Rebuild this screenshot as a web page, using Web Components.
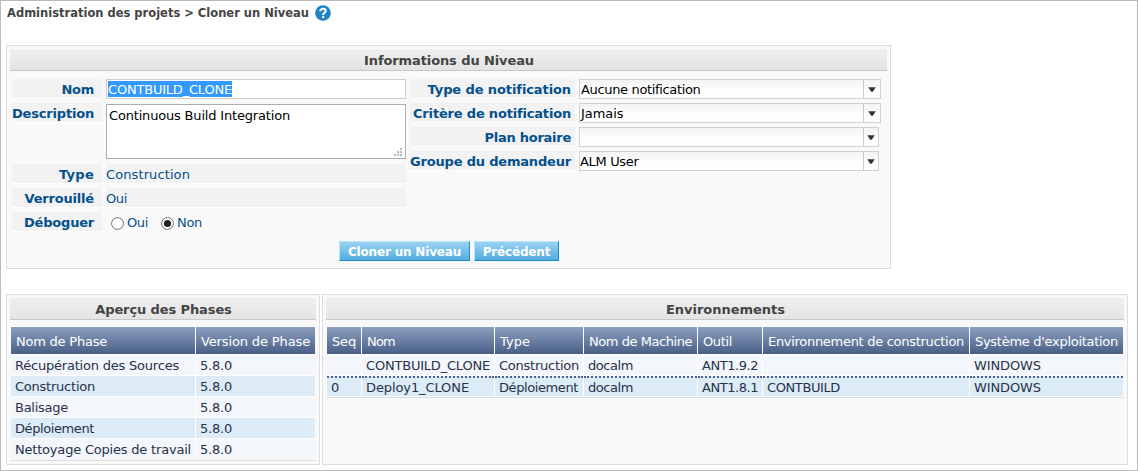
<!DOCTYPE html>
<html lang="fr">
<head>
<meta charset="utf-8">
<title>Cloner un Niveau</title>
<style>
html,body{margin:0;height:100%}
body{font:13px/21px "DejaVu Sans",Verdana,sans-serif;background:#fff;overflow:hidden}
</style>
</head>
<body>
<clone-page></clone-page>
<script>
class Base extends HTMLElement{
  constructor(){super();this.attachShadow({mode:'open'});}
  draw(html){this.shadowRoot.innerHTML=html;}
}
// Text run whose tracking is adjusted to occupy the given width.
class FitText extends Base{
  connectedCallback(){
    this.draw('<style>:host{display:inline-block;white-space:nowrap;letter-spacing:0}</style><slot></slot>');
    requestAnimationFrame(()=>this.fit());
    this.fit();
  }
  fit(){
    const w=+this.getAttribute('w');
    this.style.letterSpacing='0px';
    const n=this.getBoundingClientRect().width;
    if(w&&n)this.style.letterSpacing=((w-n)/this.textContent.length)+'px';
  }
}
const t=(s,w)=>`<fit-text w="${w}">${s}</fit-text>`;

class UiPanel extends Base{
  connectedCallback(){
    this.draw(`<style>
    :host{display:block;box-sizing:border-box;border:1px solid #ddd;background:#f9f9f9;padding:3px}
    header{height:21px;border-bottom:1px solid #c8c8c8;background:linear-gradient(#efefef,#e4e4e4);text-align:center;font-weight:bold;line-height:23px;color:#444;padding-left:1px}
    </style><header>${t(this.getAttribute('heading'),this.getAttribute('hw'))}</header><slot></slot>`);
  }
}
class FieldLabel extends Base{
  connectedCallback(){
    this.draw(`<style>:host{display:block;box-sizing:border-box;height:20px;background:#f2f2f2;border-bottom:1px solid #fff;text-align:right;padding-right:8px;font-weight:bold;line-height:21px;color:#04508c;white-space:nowrap}
    :host([tight]){padding-right:4px}</style><slot></slot>`);
  }
}
class ReadValue extends Base{
  connectedCallback(){
    this.draw(`<style>:host{display:block;box-sizing:border-box;height:20px;background:#f2f2f2;border-bottom:1px solid #fff;line-height:21px;color:#04508c}</style><slot></slot>`);
  }
}
class TextField extends Base{
  connectedCallback(){
    this.draw(`<style>:host{display:block;box-sizing:border-box;height:20px;border:1px solid #ccc;background:#fff;padding:1px}
    span{display:inline-block;vertical-align:top;height:16px;line-height:17px;background:#39f;color:#fff}</style><span><slot></slot></span>`);
  }
}
class TextArea extends Base{
  connectedCallback(){
    this.draw(`<style>:host{display:block;position:relative;box-sizing:border-box;height:55px;margin-top:1px;border:1px solid #abadb3;background:#fff;padding:0 2px;color:#000}
    svg{position:absolute;right:3px;bottom:2px}</style><slot></slot>
    <svg width="8" height="8" fill="#b8b8b8" shape-rendering="crispEdges"><path d="M6 0h2v2H6zM3 3h2v2H3zM6 3h2v2H6zM0 6h2v2H0zM3 6h2v2H3zM6 6h2v2H6z"/></svg>`);
  }
}
class SelectBox extends Base{
  connectedCallback(){
    this.draw(`<style>:host{display:flex;box-sizing:border-box;width:302px;height:20px;border:1px solid #d0d0d0;background:linear-gradient(#f3f3f3,#fff 60%);color:#000;line-height:19px}
    :host([narrow]){width:300px}
    div{flex:1;padding-left:1px}
    :host([flush]) div{padding-left:0}
    i{box-sizing:border-box;width:17px;border-left:1px solid #ccc;display:flex;align-items:center;justify-content:center}
    :host([narrow]) i{width:15px}
    </style><div><slot></slot></div><i><svg width="8" height="5"><path d="M.3 .3h7.400L4.800 4.700H3.200z" fill="#333"/></svg></i>`);
  }
}
class RadioOption extends Base{
  connectedCallback(){
    const on=this.hasAttribute('checked');
    this.draw(`<style>:host{display:flex;align-items:flex-start;gap:3px;color:#04508c;line-height:21px}svg{margin-top:5px;flex:none}</style>
    <svg width="13" height="13"><circle cx="6.5" cy="6.5" r="5.9" fill="#fff" stroke="#707070"/>${on?'<circle cx="6.5" cy="6.5" r="3.6" fill="#222"/>':''}</svg><slot></slot>`);
  }
}
class ActionButton extends Base{
  connectedCallback(){
    this.draw(`<style>:host{display:block;box-sizing:border-box;height:20px;border:1px solid;border-color:#b5e6f9 #1f8bcb #1f8bcb #b5e6f9;background:linear-gradient(#9bd2f3,#52ace0);color:#fff;font-weight:bold;font-size:12px;line-height:20px;text-align:center}</style><slot></slot>`);
  }
}
class HelpIcon extends Base{
  connectedCallback(){
    this.draw(`<style>:host{display:block;width:16px;height:16px}svg{display:block}</style><svg width="16" height="16"><circle cx="8" cy="8" r="7.8" fill="#1f82c6"/><path d="M5.3 6.2C5.3 4.4 6.5 3.7 8 3.7s2.7.8 2.7 2.3C10.7 7.9 8.1 7.700 8.100 9.900" fill="none" stroke="#fff" stroke-width="2"/><circle cx="8.100" cy="12" r="1.250" fill="#fff"/></svg>`);
  }
}
class DataGrid extends Base{
  connectedCallback(){
    const d=JSON.parse(this.getAttribute('data'));
    const cell=(c,cls)=>`<div class="${cls}">${c?t(c[0],c[1]):''}</div>`;
    this.draw(`<style>:host{display:block;margin-top:7px;border-bottom:1px solid #ddd;padding:0 1px 1px}
    section{display:grid;grid-template-columns:${d.cols.map(c=>c+'px').join(' ')};column-gap:1px;row-gap:1px;background:#fff}
    div{box-sizing:border-box;height:20px;line-height:21px;padding-left:4px;color:#26324a;background:#f3f6fb;white-space:nowrap}
    .even{background:#ddebf6}
    .head{height:27px;line-height:29px;padding-left:5px;color:#fff;background:linear-gradient(#8d9fbf,#495f87)}
    .dot{border-top:2px dotted #4a628c;line-height:19px}
    </style><section>${d.head.map(c=>cell(c,'head')).join('')}${d.rows.map((r,i)=>r.map(c=>cell(c,(i%2?'even':'')+(d.dot===i?' dot':''))).join('')).join('')}</section>`);
  }
}
class ClonePage extends Base{
  connectedCallback(){
    const v='5.8.0';
    const phases={cols:[184,119],head:[['Nom de Phase',91],['Version de Phase',109]],
      rows:[['Récupération des Sources',164],['Construction',80],['Balisage',53],['Déploiement',79],['Nettoyage Copies de travail',176]].map(r=>[r,[v,32]])};
    const envs={cols:[34,132,88,113,64,206,153],dot:1,
      head:[['Seq',24],['Nom',28],['Type',30],['Nom de Machine',103],['Outil',29],['Environnement de construction',196],["Système d'exploitation",143]],
      rows:[[null,['CONTBUILD_CLONE',124],['Construction',80],['docalm',45],['ANT1.9.2',56],null,['WINDOWS',67]],
            [['0',8],['Deploy1_CLONE',103],['Déploiement',79],['docalm',45],['ANT1.8.1',56],['CONTBUILD',73],['WINDOWS',67]]]};
    const attr=o=>JSON.stringify(o).replace(/&/g,'&amp;').replace(/"/g,'&quot;');
    this.draw(`<style>
    :host{display:block;box-sizing:border-box;width:1138px;height:471px;border:1px solid #bbb;padding:0 0 0 5px}
    nav{display:flex;align-items:center;gap:6px;height:24px;padding-left:1px;font-weight:bold;font-size:11.5px;color:#444;line-height:25px}
    .info{width:885px;height:224px;margin-top:20px}
    .form{display:flex;gap:4px;padding:8px 0 0 2px}
    .left{display:grid;grid-template-columns:90px 300px;gap:4px;height:154px;align-content:start;align-items:start}
    .right{display:grid;grid-template-columns:165px 302px;gap:4px;align-content:start}
    .radios{display:flex;gap:13px;padding-left:5px;height:20px}
    .buttons{display:flex;justify-content:flex-start;gap:4px;padding:8px 0 0 329px}
    .b1{width:131px}.b2{width:85px}
    .row{display:flex;gap:2px;margin-top:25px}
    .phases{width:314px;height:171px}.envs{width:806px;height:171px}
    </style>
    <nav>${t('Administration des projets &gt; Cloner un Niveau',302)}<help-icon></help-icon></nav>
    <ui-panel class="info" heading="Informations du Niveau" hw="170">
      <div class="form">
        <div class="left">
          <field-label>${t('Nom',32.5)}</field-label><text-field>${t('CONTBUILD_CLONE',124)}</text-field>
          <field-label>${t('Description',82)}</field-label><text-area>${t('Continuous Build Integration',181)}</text-area>
          <field-label style="margin-top:1px">${t('Type',35)}</field-label><read-value style="margin-top:1px">${t('Construction',84)}</read-value>
          <field-label>${t('Verrouillé',69.5)}</field-label><read-value>${t('Oui',21)}</read-value>
          <field-label>${t('Déboguer',70)}</field-label><div class="radios"><radio-option>${t('Oui',21)}</radio-option><radio-option checked>${t('Non',25)}</radio-option></div>
        </div>
        <div class="right">
          <field-label tight>${t('Type de notification',143)}</field-label><select-box>${t('Aucune notification',119.5)}</select-box>
          <field-label tight>${t('Critère de notification',157.5)}</field-label><select-box>${t('Jamais',42.5)}</select-box>
          <field-label tight>${t('Plan horaire',86.5)}</field-label><select-box narrow></select-box>
          <field-label tight>${t('Groupe du demandeur',161)}</field-label><select-box narrow flush>${t('ALM User',58.5)}</select-box>
        </div>
      </div>
      <div class="buttons"><action-button class="b1">${t('Cloner un Niveau',113)}</action-button><action-button class="b2">${t('Précédent',67.5)}</action-button></div>
    </ui-panel>
    <div class="row">
      <ui-panel class="phases" heading="Aperçu des Phases" hw="136.5"><data-grid data="${attr(phases)}"></data-grid></ui-panel>
      <ui-panel class="envs" heading="Environnements" hw="119"><data-grid data="${attr(envs)}"></data-grid></ui-panel>
    </div>`);
  }
}
for(const [n,c] of Object.entries({'fit-text':FitText,'ui-panel':UiPanel,'field-label':FieldLabel,'read-value':ReadValue,'text-field':TextField,'text-area':TextArea,'select-box':SelectBox,'radio-option':RadioOption,'action-button':ActionButton,'help-icon':HelpIcon,'data-grid':DataGrid,'clone-page':ClonePage}))customElements.define(n,c);
</script>
</body>
</html>
